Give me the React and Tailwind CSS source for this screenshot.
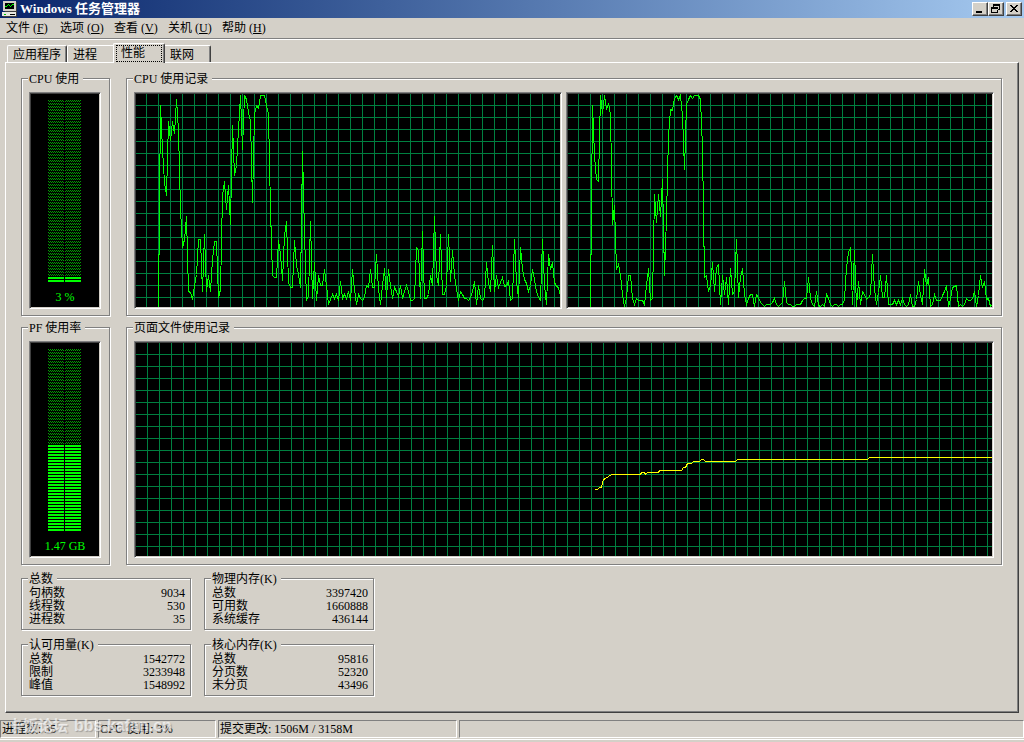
import React from 'react';

const menus = [
    { label: '文件', hotkey: 'F' },
    { label: '选项', hotkey: 'O' },
    { label: '查看', hotkey: 'V' },
    { label: '关机', hotkey: 'U' },
    { label: '帮助', hotkey: 'H' },
];

// Samples are two pixels apart, heights are counted from the bottom of the chart
const cpu0 = [
    0, 202, 158, 125, 112, 186, 167, 186, 174, 208, 177, 98, 60, 68, 91, 16, 15, 8, 22, 33, 68, 68, 16, 73, 16, 32, 16, 48, 66, 66,
    10, 18, 112, 126, 98, 122, 83, 182, 132, 142, 178, 212, 158, 212, 208, 195, 187, 105, 193, 202, 199, 212, 212, 212, 202, 193,
    98, 32, 30, 30, 67, 53, 27, 72, 86, 25, 20, 20, 67, 42, 33, 20, 156, 75, 7, 12, 86, 9, 45, 7, 32, 22, 22, 38, 22, 3, 8, 13, 9,
    13, 7, 26, 9, 13, 9, 16, 7, 38, 18, 3, 13, 9, 7, 10, 22, 20, 38, 20, 20, 53, 18, 3, 22, 39, 10, 38, 22, 9, 20, 16, 11, 22, 9,
    16, 22, 16, 7, 7, 9, 60, 57, 9, 76, 9, 9, 13, 32, 22, 91, 32, 22, 73, 13, 13, 22, 73, 26, 57, 32, 18, 7, 16, 13, 9, 9, 7, 10,
    16, 26, 3, 22, 9, 7, 10, 45, 25, 16, 62, 16, 32, 20, 25, 30, 21, 22, 26, 7, 9, 68, 25, 10, 60, 38, 28, 24, 16, 22, 38, 28, 16,
    10, 7, 68, 22, 3, 53, 38, 45, 25, 21, 20, 11,
];

const cpu1 = [
    0, 202, 152, 128, 126, 212, 194, 212, 198, 204, 193, 83, 102, 38, 43, 32, 13, 1, 10, 32, 32, 9, 3, 9, 7, 7, 7, 3, 22, 39, 7, 9,
    113, 85, 113, 91, 128, 32, 90, 172, 198, 197, 209, 212, 208, 212, 192, 138, 203, 208, 212, 209, 212, 212, 212, 208, 160, 30,
    32, 16, 22, 45, 16, 40, 43, 3, 32, 13, 30, 3, 39, 13, 16, 68, 10, 30, 39, 13, 3, 9, 13, 13, 1, 13, 10, 5, 3, 1, 3, 3, 3, 5, 9,
    3, 1, 3, 5, 26, 5, 3, 3, 1, 1, 3, 3, 3, 7, 9, 9, 30, 9, 3, 1, 16, 2, 1, 3, 1, 13, 9, 3, 1, 3, 3, 1, 3, 3, 8, 40, 55, 60, 3,
    57, 1, 26, 3, 16, 13, 8, 10, 13, 53, 18, 3, 15, 32, 10, 10, 32, 3, 3, 3, 7, 3, 7, 3, 9, 3, 1, 3, 13, 1, 1, 8, 26, 12, 3, 38,
    22, 30, 1, 3, 13, 7, 7, 7, 12, 16, 22, 1, 8, 20, 21, 22, 1, 3, 1, 3, 9, 7, 7, 9, 16, 1, 12, 32, 20, 26, 8, 9, 1, 3,
];

const pageFile =
    '458,146 461,146 463,144 465,144 467,136 469,135 472,133 475,131 504,131 505,129 508,129 509,131 511,129 522,129 ' +
    '523,127 545,127 547,124 549,124 551,120 555,120 557,118 563,118 565,116 567,116 569,118 599,118 601,116 731,116 ' +
    '733,114 2000,114';

const stats = [
    { title: '总数', rows: [['句柄数', '9034'], ['线程数', '530'], ['进程数', '35']] },
    { title: '物理内存(K)', rows: [['总数', '3397420'], ['可用数', '1660888'], ['系统缓存', '436144']] },
    { title: '认可用量(K)', rows: [['总数', '1542772'], ['限制', '3233948'], ['峰值', '1548992']] },
    { title: '核心内存(K)', rows: [['总数', '95816'], ['分页数', '52320'], ['未分页', '43496']] },
];

const toPoints = (samples) => samples.map((h, i) => `${22 + i * 2},${213 - h}`).join(' ');

function Group({ title, className, children }) {
    return (
        <fieldset className={`border border-[#808080] shadow-[1px_1px_0_#fff,inset_1px_1px_0_#fff] ${className}`}>
            <legend className="relative -ml-px h-[13px] bg-[#d4d0c8] pr-1 pl-px leading-[15px]">{title}</legend>
            {children}
        </fieldset>
    );
}

function Sunken({ className, children }) {
    return (
        <div className={`border border-t-[#808080] border-l-[#808080] border-r-white border-b-white bg-black p-px shadow-[inset_1px_1px_0_#404040,inset_-1px_-1px_0_#d4d0c8] ${className}`}>
            {children}
        </div>
    );
}

// --- LED style usage meter, 61 rows in two columns ---
function Meter({ id, lit, label }) {
    const split = (61 - lit) * 3;
    return (
        <Sunken className="w-[72px]">
            <div className="flex h-[213px] flex-col items-center pt-1.5">
                <svg width="34" height="183" shapeRendering="crispEdges" aria-hidden="true">
                    <defs>
                        <pattern id={id} width="2" height="3" patternUnits="userSpaceOnUse">
                            <path d="M0 0h1v1H0zM1 1h1v1H1z" fill="#00a000" />
                        </pattern>
                        <pattern id={`${id}-lit`} width="2" height="3" patternUnits="userSpaceOnUse">
                            <rect width="2" height="2" fill="#00ff00" />
                        </pattern>
                    </defs>
                    <rect width="33" height={split} fill={`url(#${id})`} />
                    <rect y={split} width="33" height={lit * 3} fill={`url(#${id}-lit)`} />
                    <rect x="16" width="1" height="183" fill="#000" />
                </svg>
                <span className="mt-2 leading-3 text-[#00ff00]">{label}</span>
            </div>
        </Sunken>
    );
}

function Chart({ id, offset, points, color }) {
    return (
        <Sunken className="min-w-0 flex-1">
            <svg className="block h-[213px] w-full" shapeRendering="crispEdges" aria-hidden="true">
                <defs>
                    <pattern id={id} width="12" height="12" patternUnits="userSpaceOnUse">
                        <rect x={offset} width="1" height="12" fill="#008040" />
                        <rect y="11" width="12" height="1" fill="#008040" />
                    </pattern>
                </defs>
                <rect width="100%" height="100%" fill={`url(#${id})`} />
                <polyline points={points} fill="none" stroke={color} strokeWidth="1" transform="translate(0.5 0.5)" />
            </svg>
        </Sunken>
    );
}

function StatGroup({ title, rows }) {
    return (
        <Group title={title} className="w-[170px] pr-[5px] pb-[3px] pl-[7px]">
            <table className="mt-0.5 w-full border-collapse">
                <tbody>
                    {rows.map(([name, value]) => (
                        <tr key={name} className="h-[13px] leading-[13px]">
                            <th scope="row" className="p-0 text-left font-normal">{name}</th>
                            <td className="p-0 text-right">{value}</td>
                        </tr>
                    ))}
                </tbody>
            </table>
        </Group>
    );
}

function CaptionButton({ label, children }) {
    return (
        <button
            type="button"
            aria-label={label}
            className="h-[14px] w-4 border border-t-white border-l-white border-r-[#404040] border-b-[#404040] bg-[#d4d0c8] shadow-[inset_-1px_-1px_0_#808080]"
        >
            <svg width="14" height="12" shapeRendering="crispEdges" className="block" aria-hidden="true">
                {children}
            </svg>
        </button>
    );
}

function TitleBar() {
    return (
        <header className="flex h-[18px] items-center bg-linear-to-r from-[#0a246a] to-[#a6caf0] pr-0.5 pl-0.5">
            <svg width="16" height="16" shapeRendering="crispEdges" aria-hidden="true">
                <path d="M1 0h13v10H1z" fill="#d4d0c8" />
                <path d="M14 1h1v10H3v-1h11z" fill="#404040" />
                <path d="M3 2h9v6H3z" fill="#000" />
                <path d="M3 5h2v1H3zM5 4h1v1H5zM6 3h1v1H6zM7 4h1v1H7zM8 5h1v1H8zM9 4h1v1H9zM10 3h2v1h-2z" fill="#00ff00" />
                <path d="M0 11h14v4H0z" fill="#e8e8e0" />
                <path d="M14 11h1v4h-1zM1 15h14v1H1zM4 10h7v1H4z" fill="#404040" />
                <path d="M8 13h5v1H8z" fill="#000" />
                <path d="M2 13h2v1H2z" fill="#00c000" />
            </svg>
            <h1 className="ml-0.5 flex-1 text-[13px] leading-[18px] font-bold text-white">Windows 任务管理器</h1>
            <div className="flex">
                <CaptionButton label="最小化">
                    <path d="M3 8h6v2H3z" />
                </CaptionButton>
                <CaptionButton label="还原">
                    <path d="M4 1h7v6H8V6h2V3H5v1H4zM2 4h7v6H2zM3 6v3h5V6z" fillRule="evenodd" />
                </CaptionButton>
            </div>
            <div className="ml-0.5 flex">
                <CaptionButton label="关闭">
                    <path d="M3 2h2v1h1v1h2V3h1V2h2v1h-1v1H9v1H8v1h1v1h1v1h1v1H9V8H8V7H6v1H5v1H3V8h1V7h1V6h1V5H5V4H4V3H3z" />
                </CaptionButton>
            </div>
        </header>
    );
}

const tabBase = 'bg-[#d4d0c8] text-left leading-4 border-t border-white';
const tabLeft = 'rounded-tl-[2px] border-l';
const tabRight = 'rounded-tr-[2px] border-r border-r-[#404040] shadow-[inset_-1px_0_0_#808080]';

function Tabs() {
    return (
        <div role="tablist" className="flex items-end pt-[3px] pl-[7px]">
            <button type="button" role="tab" className={`${tabBase} ${tabLeft} ${tabRight} h-[17px] w-[60px] pt-px pl-[5px]`}>应用程序</button>
            <button type="button" role="tab" className={`${tabBase} ${tabLeft} h-[17px] w-[46px] pt-px pl-[5px]`}>进程</button>
            <button
                type="button"
                role="tab"
                aria-selected="true"
                className={`${tabBase} ${tabLeft} ${tabRight} relative -mb-px h-5 w-[52px] pt-px pr-0.5 pb-px pl-0.5`}
            >
                <span className="block h-[17px] border border-dotted border-black pl-1 leading-[14px]">性能</span>
            </button>
            <button type="button" role="tab" className={`${tabBase} ${tabRight} h-[17px] w-[46px] pt-px pl-[5px]`}>联网</button>
        </div>
    );
}

const pane = 'border border-t-[#808080] border-l-[#808080] border-r-white border-b-white pl-px leading-4';

function StatusBar() {
    return (
        <footer className="relative mt-[7px] border-b border-white pb-px">
            <div className="flex h-[18px] gap-0.5 whitespace-nowrap">
                <div className={`${pane} w-24`}>进程数: 35</div>
                <div className={`${pane} w-[118px]`}>CPU 使用: 3%</div>
                <div className={`${pane} w-[239px]`}>提交更改: 1506M / 3158M</div>
                <div className={`${pane} flex-1`} />
            </div>
            <div className="absolute -top-0.5 left-2 flex gap-1.5 font-['Liberation_Sans','Noto_Sans_CJK_SC',sans-serif] text-[16px] leading-4 font-bold whitespace-nowrap text-white/65 [text-shadow:1px_1px_1px_#80808099]">
                <span className="text-[15px]">卡饭论坛</span>
                <span>bbs.kafan.cn</span>
            </div>
        </footer>
    );
}

export default function App() {
    return (
        <div className="min-h-screen bg-[#d4d0c8] font-['Liberation_Serif','Noto_Sans_CJK_SC',serif] text-[12px] text-black">
            <TitleBar />
            <nav className="flex h-[21px] items-center border-b border-[#808080] pl-1.5">
                {menus.map(({ label, hotkey }) => (
                    <button key={hotkey} type="button" className="w-[54px] text-left leading-5">
                        {label} (<u>{hotkey}</u>)
                    </button>
                ))}
            </nav>
            <div className="border-t border-white">
                <Tabs />
            </div>

            <main className="mr-[5px] ml-[5px] border border-t-white border-r-[#404040] border-b-[#404040] border-l-white pt-[9px] pr-4 pb-4 pl-[15px] shadow-[inset_-1px_-1px_0_#808080]">
                <div className="grid grid-cols-[89px_1fr] gap-x-4 gap-y-[5px]">
                    <Group title="CPU 使用" className="px-[7px] pt-[7px] pb-1.5">
                        <Meter id="cpu-meter" lit={2} label="3 %" />
                    </Group>
                    <Group title="CPU 使用记录" className="min-w-0 px-[7px] pt-[7px] pb-1.5">
                        <div className="flex gap-1">
                            <Chart id="cpu0-grid" offset={10} points={toPoints(cpu0)} color="#00ff00" />
                            <Chart id="cpu1-grid" offset={10} points={toPoints(cpu1)} color="#00ff00" />
                        </div>
                    </Group>
                    <Group title="PF 使用率" className="px-[7px] pt-[7px] pb-1.5">
                        <Meter id="pf-meter" lit={29} label="1.47 GB" />
                    </Group>
                    <Group title="页面文件使用记录" className="min-w-0 px-[7px] pt-[7px] pb-1.5">
                        <div className="flex">
                            <Chart id="pf-grid" offset={11} points={pageFile} color="#ffff00" />
                        </div>
                    </Group>
                </div>
                <div className="mt-[7px] grid grid-cols-[170px_170px] gap-x-[13px] gap-y-2">
                    {stats.map((group) => (
                        <StatGroup key={group.title} title={group.title} rows={group.rows} />
                    ))}
                </div>
            </main>

            <StatusBar />
        </div>
    );
}
